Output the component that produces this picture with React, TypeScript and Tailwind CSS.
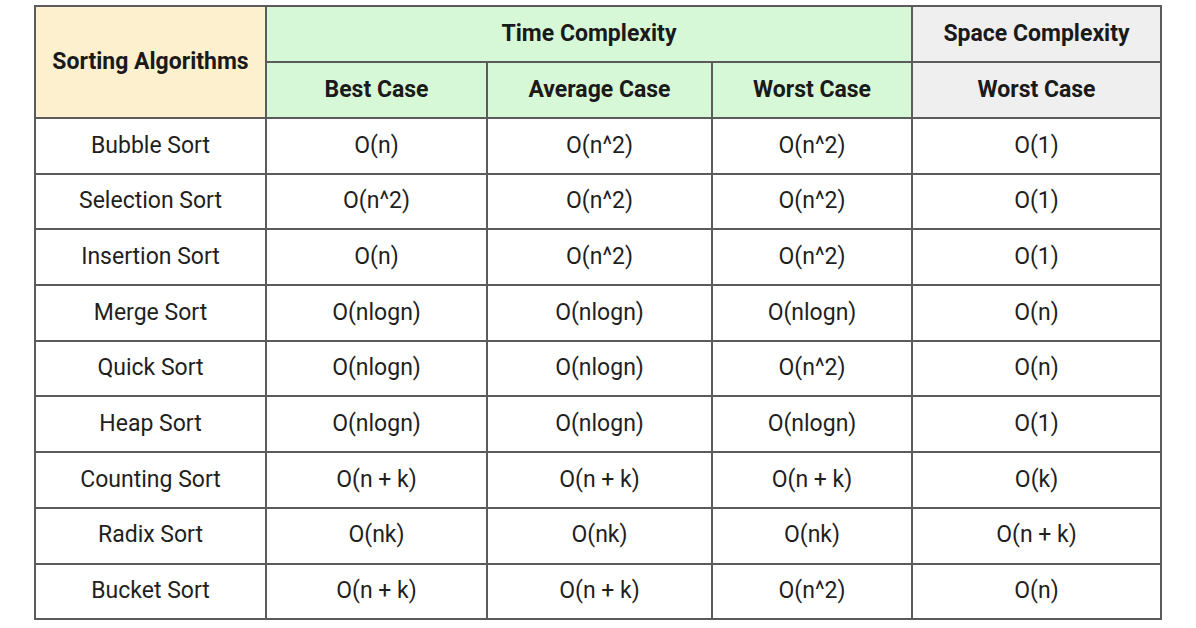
import React from "react";

type Row = [string, string, string, string, string];

const rows: Row[] = [
	["Bubble Sort", "O(n)", "O(n^2)", "O(n^2)", "O(1)"],
	["Selection Sort", "O(n^2)", "O(n^2)", "O(n^2)", "O(1)"],
	["Insertion Sort", "O(n)", "O(n^2)", "O(n^2)", "O(1)"],
	["Merge Sort", "O(nlogn)", "O(nlogn)", "O(nlogn)", "O(n)"],
	["Quick Sort", "O(nlogn)", "O(nlogn)", "O(n^2)", "O(n)"],
	["Heap Sort", "O(nlogn)", "O(nlogn)", "O(nlogn)", "O(1)"],
	["Counting Sort", "O(n + k)", "O(n + k)", "O(n + k)", "O(k)"],
	["Radix Sort", "O(nk)", "O(nk)", "O(nk)", "O(n + k)"],
	["Bucket Sort", "O(n + k)", "O(n + k)", "O(n^2)", "O(n)"],
];

const cell = "border-2 border-[#5b5b5b] text-center align-middle";

export default function App() {
	return (
		<div
			className="w-[1196px] h-[628px] bg-white pt-[5px] pl-[34px]"
			style={{ fontFamily: "Roboto, 'Liberation Sans', sans-serif" }}
		>
			<table className="table-fixed border-collapse w-[1126px] text-[23px] text-[#1f1f1f]">
				<colgroup>
					<col className="w-[231px]" />
					<col className="w-[221px]" />
					<col className="w-[225px]" />
					<col className="w-[200px]" />
					<col className="w-[249px]" />
				</colgroup>
				<thead className="text-[#1a1a1a]">
					{/* Group headers */}
					<tr className="h-[56px] font-bold">
						<th rowSpan={2} className={`${cell} bg-[#fdf0cf]`}>
							Sorting Algorithms
						</th>
						<th colSpan={3} className={`${cell} bg-[#d7f8d7]`}>
							Time Complexity
						</th>
						<th className={`${cell} bg-[#efefef]`}>Space Complexity</th>
					</tr>
					<tr className="h-[56px] font-bold">
						<th className={`${cell} bg-[#d7f8d7]`}>Best Case</th>
						<th className={`${cell} bg-[#d7f8d7]`}>Average Case</th>
						<th className={`${cell} bg-[#d7f8d7]`}>Worst Case</th>
						<th className={`${cell} bg-[#efefef]`}>Worst Case</th>
					</tr>
				</thead>
				<tbody>
					{rows.map((row) => (
						<tr key={row[0]} className="h-[55.7px]">
							{row.map((value, i) => (
								<td key={i} className={cell}>
									{value}
								</td>
							))}
						</tr>
					))}
				</tbody>
			</table>
		</div>
	);
}
